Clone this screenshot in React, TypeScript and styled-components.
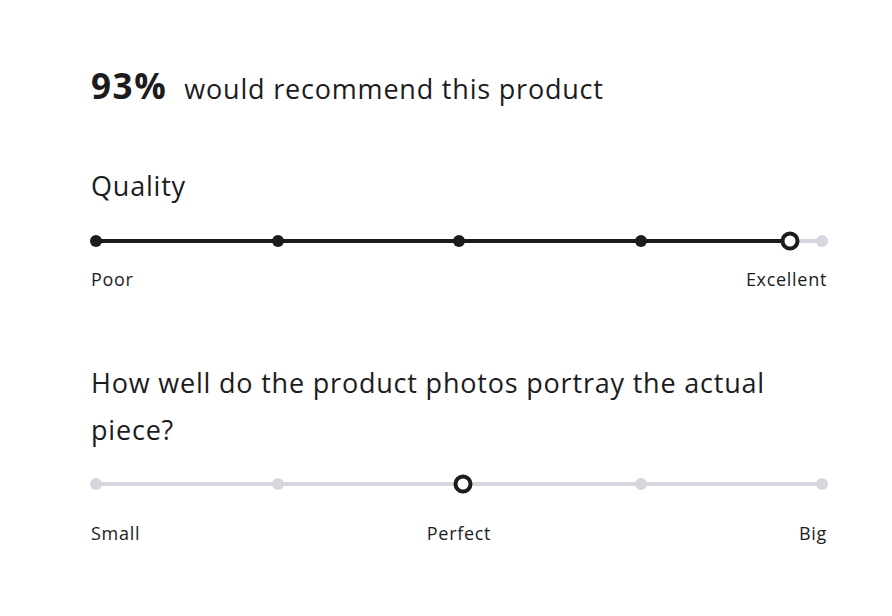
import { createGlobalStyle, styled } from 'styled-components';

const GlobalStyle = createGlobalStyle`
  body {
    margin: 0;
    background: #ffffff;
    font-family: "Open Sans", "Noto Sans", sans-serif;
    color: #1c1c1e;
  }
`;

const Page = styled.div`
  width: 736px;
  padding: 62px 0 0 91px;
  display: flex;
  flex-direction: column;
`;

const Summary = styled.div`
  display: flex;
  align-items: baseline;
  gap: 17px;
  height: 48px;
  line-height: 48px;
`;

const Percent = styled.span`
  font-size: 35px;
  font-weight: 700;
  letter-spacing: 1.6px;
`;

const SummaryText = styled.span`
  font-size: 27px;
  letter-spacing: 0.8px;
`;

const Question = styled.h2<{ $top: number }>`
  margin: ${(p) => p.$top}px 0 0;
  font-size: 27px;
  font-weight: 400;
  letter-spacing: 0.8px;
  line-height: 47px;
  max-width: 700px;
`;

const Track = styled.div<{ $top: number }>`
  position: relative;
  height: 20px;
  margin: ${(p) => p.$top}px 5px 0;
`;

const Rail = styled.div<{ $dark?: boolean }>`
  position: absolute;
  left: 0;
  top: 50%;
  height: 4px;
  transform: translateY(-50%);
  background: ${(p) => (p.$dark ? '#1c1c1e' : '#d6d6de')};
  border-radius: 2px;
`;

const Dot = styled.span<{ $dark: boolean }>`
  position: absolute;
  top: 50%;
  width: 12px;
  height: 12px;
  border-radius: 50%;
  transform: translate(-50%, -50%);
  background: ${(p) => (p.$dark ? '#1c1c1e' : '#d6d6de')};
`;

const Thumb = styled.span`
  position: absolute;
  top: 50%;
  width: 19px;
  height: 19px;
  box-sizing: border-box;
  border: 4px solid #1c1c1e;
  background: #ffffff;
  border-radius: 50%;
  transform: translate(-50%, -50%);
`;

const Labels = styled.div<{ $top: number }>`
  display: grid;
  grid-template-columns: 1fr auto 1fr;
  margin-top: ${(p) => p.$top}px;
  font-size: 18px;
  letter-spacing: 0.7px;
  line-height: 24px;
`;

const Label = styled.span<{ $align: 'left' | 'center' | 'right' }>`
  text-align: ${(p) => p.$align};
`;

type SliderProps = { value: number; filled: boolean; top: number };

const Slider = ({ value, filled, top }: SliderProps) => {
  const ticks = [0, 25, 50, 75, 100];
  return (
    <Track $top={top}>
      <Rail style={{ width: '100%' }} />
      {filled && <Rail $dark style={{ width: `${value}%` }} />}
      {ticks.map((t) => (
        <Dot key={t} $dark={filled && t < value} style={{ left: `${t}%` }} />
      ))}
      <Thumb style={{ left: `${value}%` }} />
    </Track>
  );
};

export default function App() {
  return (
    <>
      <GlobalStyle />
      <Page>
        <Summary>
          <Percent>93%</Percent>
          <SummaryText>would recommend this product</SummaryText>
        </Summary>
        <Question $top={52}>Quality</Question>
        <Slider value={95.6} filled top={22} />
        <Labels $top={16}>
          <Label $align="left">Poor</Label>
          <Label $align="center"></Label>
          <Label $align="right">Excellent</Label>
        </Labels>
        <Question $top={68}>How well do the product photos portray the actual piece?</Question>
        <Slider value={50.6} filled={false} top={21} />
        <Labels $top={27}>
          <Label $align="left">Small</Label>
          <Label $align="center">Perfect</Label>
          <Label $align="right">Big</Label>
        </Labels>
      </Page>
    </>
  );
}
